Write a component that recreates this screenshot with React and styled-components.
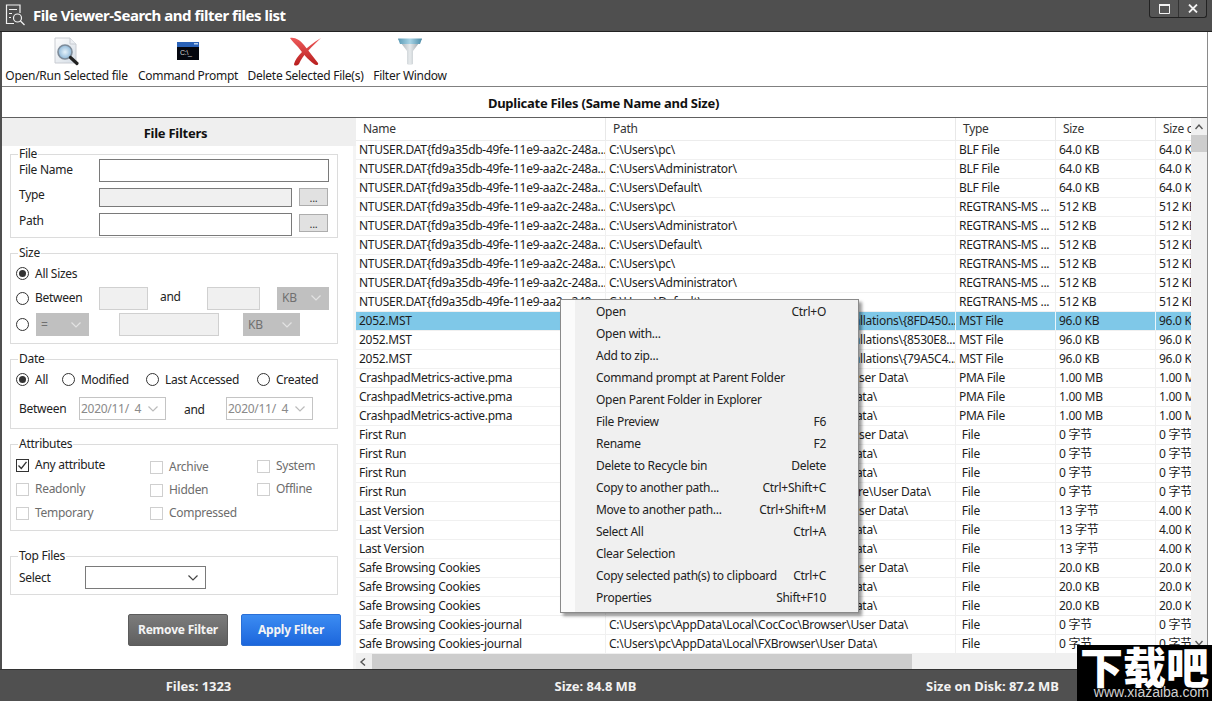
import React from 'react'
import styled, {createGlobalStyle} from 'styled-components'

const GlobalStyle = createGlobalStyle`
  html, body { margin: 0; padding: 0; background: #fff; }
  * { box-sizing: border-box; }
`

const Win = styled.div`
  position: relative;
  width: 1212px;
  height: 701px;
  overflow: hidden;
  display: flex;
  flex-direction: column;
  background: #fff;
  color: #222;
  font: 12px/16px "Noto Sans", "Noto Sans CJK SC", sans-serif;
  letter-spacing: -0.28px;
`
const TitleBar = styled.div`
  height: 32px;
  flex-shrink: 0;
  display: flex;
  align-items: flex-start;
  padding: 0 5px 0 5px;
  background: #4f4f4f;
  border-bottom: 1px solid #222;
`
const TitleIcon = styled.svg`
  width: 21px;
  height: 22px;
  margin-top: 4px;
`
const TitleText = styled.div`
  margin: 5px 0 0 7px;
  color: #fff;
  font-size: 15px;
  line-height: 20px;
  font-weight: 700;
  letter-spacing: -0.47px;
`
const WinButtons = styled.div`
  margin-left: auto;
  display: flex;
  height: 18px;
  border: 1px solid #222;
  border-top: 0;
  border-radius: 0 0 3px 3px;
  background: #555;
`
const WinButton = styled.div`
  width: 28px;
  display: flex;
  align-items: center;
  justify-content: center;
  & + & { border-left: 1px solid #333; }
`
const Frame = styled.div`
  flex: 1;
  min-height: 0;
  display: flex;
  flex-direction: column;
  margin-right: 4px;
  border-left: 2px solid #4f4f4f;
  border-right: 1px solid #8a8a8a;
`
const Toolbar = styled.div`
  height: 55px;
  flex-shrink: 0;
  display: flex;
  gap: 11px;
  padding: 5px 0 0 4px;
  border-bottom: 1px solid #808080;
`
const ToolButton = styled.div`
  display: flex;
  flex-direction: column;
  align-items: center;
  width: ${p => p.$w}px;
  white-space: nowrap;
  color: #1a1a1a;
`
const ToolIcon = styled.svg`
  width: 32px;
  height: 30px;
  margin-bottom: 1px;
`
const Banner = styled.div`
  height: 31px;
  flex-shrink: 0;
  display: flex;
  align-items: center;
  justify-content: center;
  font-size: 13px;
  font-weight: 700;
  letter-spacing: -0.26px;
  color: #111;
  padding: 2px 2px 0 0;
  border-bottom: 1px solid #606060;
`
const Body = styled.div`
  flex: 1;
  min-height: 0;
  display: flex;
`
const Side = styled.div`
  width: 354px;
  flex-shrink: 0;
  display: flex;
  flex-direction: column;
  border-right: 3px solid #f4f4f4;
`
const SideHead = styled.div`
  height: 28px;
  flex-shrink: 0;
  margin-right: -3px;
  display: flex;
  align-items: center;
  justify-content: center;
  padding: 1px 7px 0 0;
  background: #efefef;
  font-size: 13px;
  font-weight: 700;
  letter-spacing: -0.26px;
  color: #111;
`
const SideBody = styled.div`
  flex: 1;
  display: flex;
  flex-direction: column;
  padding: 8px 15px 0 8px;
`
const Group = styled.div`
  position: relative;
  height: ${p => p.$h}px;
  margin-bottom: ${p => p.$gap}px;
  padding: ${p => p.$top}px 8px 0 5px;
  border: 1px solid #dcdcdc;
  display: flex;
  flex-direction: column;
  gap: ${p => p.$rowGap || 0}px;
`
const GroupTitle = styled.div`
  position: absolute;
  top: -9px;
  left: 7px;
  padding: 0 1px;
  background: #fff;
  color: #222;
`
const Row = styled.div`
  display: flex;
  align-items: ${p => p.$align || 'center'};
  height: ${p => p.$h}px;
  padding-left: ${p => p.$pad || 0}px;
`
const Label = styled.div`
  width: ${p => p.$w}px;
  flex-shrink: 0;
  padding-left: ${p => p.$pl || 0}px;
  margin-top: ${p => p.$mt || 0}px;
  white-space: nowrap;
  color: #222;
`
const Input = styled.div`
  width: ${p => p.$w}px;
  height: ${p => p.$h || 23}px;
  flex-shrink: 0;
  margin-left: ${p => p.$ml || 0}px;
  border: 1px solid ${p => (p.$off ? '#d0d0d0' : '#7a7a7a')};
  background: ${p => (p.$fill ? '#f0f0f0' : '#fff')};
`
const DotsButton = styled.div`
  width: 29px;
  height: 18px;
  margin: ${p => p.$mt || 0}px 0 0 7px;
  border: 1px solid #adadad;
  background: #e1e1e1;
  text-align: center;
  line-height: 17px;
  font-size: 11px;
  color: #333;
`
const Select = styled.div`
  width: ${p => p.$w}px;
  height: 23px;
  flex-shrink: 0;
  margin-left: ${p => p.$ml || 0}px;
  display: flex;
  align-items: center;
  justify-content: space-between;
  padding: 0 7px 0 4px;
  background: ${p => (p.$plain ? '#fff' : '#c0c0c0')};
  border: 1px solid ${p => (p.$plain ? '#7a7a7a' : '#c0c0c0')};
  color: #707070;
`
const DateBox = styled(Select)`
  background: #fff;
  border-color: #c4c4c4;
  color: #8a8a8a;
  padding-left: 1px;
  white-space: pre;
`
const Chevron = styled.svg`
  width: 10px;
  height: 6px;
  flex-shrink: 0;
`
const Option = styled.div`
  width: ${p => (p.$w ? `${p.$w}px` : 'auto')};
  flex-shrink: 0;
  display: flex;
  align-items: center;
  gap: 6px;
  white-space: nowrap;
  margin-top: ${p => p.$mt || 0}px;
  color: ${p => (p.$off ? '#6d6d6d' : '#222')};
`
const Radio = styled.span`
  width: 13px;
  height: 13px;
  flex-shrink: 0;
  border-radius: 50%;
  border: 1px solid #333;
  background: #fff;
  display: flex;
  align-items: center;
  justify-content: center;
  &::after {
    content: '';
    width: 7px;
    height: 7px;
    border-radius: 50%;
    background: ${p => (p.$on ? '#333' : 'transparent')};
  }
`
const Box = styled.span`
  width: 13px;
  height: 13px;
  flex-shrink: 0;
  border: 1px solid ${p => (p.$off ? '#cfcfcf' : '#333')};
  background: #fff;
  display: flex;
  align-items: center;
  justify-content: center;
`
const AttrGrid = styled.div`
  display: grid;
  grid-template-columns: 134px 107px 1fr;
  grid-auto-rows: 24px;
  align-items: start;
`
const Actions = styled.div`
  display: flex;
  justify-content: flex-end;
  gap: 13px;
  margin: 19px -3px 0 0;
`
const ActionButton = styled.div`
  width: 100px;
  height: 32px;
  display: flex;
  align-items: center;
  justify-content: center;
  border-radius: 2px;
  font-weight: 700;
  letter-spacing: -0.2px;
  color: #f4f4f4;
  border: 1px solid ${p => (p.$primary ? '#2a6fd6' : '#5c5c5c')};
  background: linear-gradient(${p => (p.$primary ? '#3c8cf2, #1c66dc' : '#7c7c7c, #5f5f5f')});
`
const ListWrap = styled.div`
  flex: 1;
  min-width: 0;
  display: flex;
  flex-direction: column;
`
const ListTop = styled.div`
  flex: 1;
  min-height: 0;
  display: flex;
`
const Table = styled.div`
  flex: 1;
  min-width: 0;
  overflow: hidden;
`
const TableRow = styled.div`
  display: grid;
  grid-template-columns: 249px 350px 100px 100px 100px;
  width: 899px;
  height: 19px;
  border-bottom: 1px solid #f0f0f0;
  background: ${p => (p.$selected ? '#7fc8e8' : 'transparent')};
`
const HeadRow = styled(TableRow)`
  height: 23px;
  border-bottom: 1px solid #ececec;
`
const Cell = styled.div`
  padding-left: 3px;
  line-height: 18px;
  overflow: hidden;
  white-space: pre;
  color: #1d1d1d;
  border-left: 1px solid ${p => (p.$selected ? '#eaf6fb' : '#f0f0f0')};
  &:first-child { border-left: 0; }
`
const HeadCell = styled.div`
  padding-left: 7px;
  line-height: 21px;
  overflow: hidden;
  white-space: pre;
  color: #333;
  border-left: 1px solid #e8e8e8;
  &:first-child { border-left: 0; }
`
const VBar = styled.div`
  width: 16px;
  flex-shrink: 0;
  display: flex;
  flex-direction: column;
  align-items: center;
  background: #f0f0f0;
  padding-top: 5px;
`
const VThumb = styled.div`
  width: 100%;
  height: 17px;
  margin-top: 4px;
  background: #cdcdcd;
`
const VDown = styled.div`
  margin-top: auto;
  padding-bottom: 7px;
  display: flex;
`
const HBar = styled.div`
  height: 15px;
  flex-shrink: 0;
  display: flex;
  align-items: center;
  background: #f0f0f0;
  padding-left: 3px;
`
const HThumb = styled.div`
  width: 540px;
  height: 100%;
  margin-left: 5px;
  background: #cdcdcd;
`
const Arrow = styled.svg`
  width: 8px;
  height: 8px;
  flex-shrink: 0;
`
const Footer = styled.div`
  height: 32px;
  flex-shrink: 0;
  display: grid;
  grid-template-columns: repeat(3, 397px);
  align-items: center;
  padding-top: 1px;
  background: #505050;
  border-top: 1px solid #333;
  color: #f2f2f2;
  font-size: 13px;
  font-weight: 700;
  letter-spacing: -0.05px;
  text-align: center;
`
const Menu = styled.div`
  position: absolute;
  left: 560px;
  top: 299px;
  width: 299px;
  padding: 1px 0 3px;
  border: 1px solid #8a8a8a;
  box-shadow: 3px 3px 3px rgba(0, 0, 0, .4);
  background: linear-gradient(90deg, #fbfbfb 14px, #f0f0f0 14px);
`
const MenuItem = styled.div`
  height: 22px;
  display: flex;
  align-items: center;
  justify-content: space-between;
  padding: 0 32px 0 35px;
  color: #222;
  white-space: nowrap;
`
const Mark = styled.div`
  position: absolute;
  right: 0;
  bottom: 0;
  width: 135px;
  height: 56px;
  background: #000;
  color: #fff;
  display: flex;
  flex-direction: column;
  align-items: center;
  overflow: hidden;
`
const MarkLogo = styled.div`
  font: 900 43px/40px "Noto Sans CJK SC", sans-serif;
  letter-spacing: 0;
  white-space: nowrap;
`
const MarkUrl = styled.div`
  align-self: flex-end;
  padding-right: 3px;
  font: 14px/15px "Liberation Sans", sans-serif;
  letter-spacing: 0;
  color: #d0d0d0;
`

const NT = 'NTUSER.DAT{fd9a35db-49fe-11e9-aa2c-248a...'
const COC = 'C:\\Users\\pc\\AppData\\Local\\CocCoc\\Browser\\User Data\\'
const FX = 'C:\\Users\\pc\\AppData\\Local\\FXBrowser\\User Data\\'
const LONG = 'C:\\Users\\pc\\AppData\\Local\\KingsoftPC\\Software\\User Data\\'
const INST = 'C:\\ProgramData\\Microsoft\\Office\\Shared\\Installations\\'

const ntPaths = ['C:\\Users\\pc\\', 'C:\\Users\\Administrator\\', 'C:\\Users\\Default\\']

const rows = [
  ...[0, 1, 2].map(i => [NT, ntPaths[i], 'BLF File', '64.0 KB', '64.0 KB']),
  ...[0, 1, 2, 3, 4, 5].map(i => [NT, ntPaths[i % 3], 'REGTRANS-MS ...', '512 KB', '512 KB']),
  ['2052.MST', INST + '{8FD450...', 'MST File', '96.0 KB', '96.0 KB'],
  ['2052.MST', INST + '{8530E8...', 'MST File', '96.0 KB', '96.0 KB'],
  ['2052.MST', INST + '{79A5C4...', 'MST File', '96.0 KB', '96.0 KB'],
  ['CrashpadMetrics-active.pma', COC, 'PMA File', '1.00 MB', '1.00 MB'],
  ['CrashpadMetrics-active.pma', FX, 'PMA File', '1.00 MB', '1.00 MB'],
  ['CrashpadMetrics-active.pma', FX, 'PMA File', '1.00 MB', '1.00 MB'],
  ['First Run', COC, ' File', '0 字节', '0 字节'],
  ['First Run', FX, ' File', '0 字节', '0 字节'],
  ['First Run', FX, ' File', '0 字节', '0 字节'],
  ['First Run', LONG, ' File', '0 字节', '0 字节'],
  ['Last Version', COC, ' File', '13 字节', '4.00 KB'],
  ['Last Version', FX, ' File', '13 字节', '4.00 KB'],
  ['Last Version', FX, ' File', '13 字节', '4.00 KB'],
  ['Safe Browsing Cookies', COC, ' File', '20.0 KB', '20.0 KB'],
  ['Safe Browsing Cookies', FX, ' File', '20.0 KB', '20.0 KB'],
  ['Safe Browsing Cookies', FX, ' File', '20.0 KB', '20.0 KB'],
  ['Safe Browsing Cookies-journal', COC, ' File', '0 字节', '0 字节'],
  ['Safe Browsing Cookies-journal', FX, ' File', '0 字节', '0 字节'],
]

const menuItems = [
  ['Open', 'Ctrl+O'],
  ['Open with...'],
  ['Add to zip...'],
  ['Command prompt at Parent Folder'],
  ['Open Parent Folder in Explorer'],
  ['File Preview', 'F6'],
  ['Rename', 'F2'],
  ['Delete to Recycle bin', 'Delete'],
  ['Copy to another path...', 'Ctrl+Shift+C'],
  ['Move to another path...', 'Ctrl+Shift+M'],
  ['Select All', 'Ctrl+A'],
  ['Clear Selection'],
  ['Copy selected path(s) to clipboard', 'Ctrl+C'],
  ['Properties', 'Shift+F10'],
]

const ChevronDown = ({color = '#e2e2e2'}) => (
  <Chevron viewBox="0 0 10 6">
    <path d="M.5.5 5 5 9.5.5" fill="none" stroke={color} strokeWidth="1.2" />
  </Chevron>
)

const OpenIcon = () => (
  <ToolIcon viewBox="0 0 32 30">
    <defs>
      <linearGradient id="pageFill" x1="0" y1="0" x2="1" y2="1">
        <stop offset="0" stopColor="#fdfdfd" />
        <stop offset="1" stopColor="#d5dde6" />
      </linearGradient>
      <radialGradient id="lensFill">
        <stop offset="0" stopColor="#e6f3fb" />
        <stop offset="1" stopColor="#8fb8d8" />
      </radialGradient>
    </defs>
    <path d="M4 1h15l6 6v19H4z" fill="url(#pageFill)" stroke="#c9ccd2" />
    <path d="M19 1v6h6" fill="#eceff3" stroke="#c9ccd2" />
    <circle cx="14" cy="15" r="7" fill="url(#lensFill)" stroke="#7d8b99" strokeWidth="1.6" />
    <path d="M19.5 20.5 26 26.5" stroke="#222" strokeWidth="3.2" strokeLinecap="round" />
  </ToolIcon>
)

const PromptIcon = () => (
  <ToolIcon viewBox="0 0 32 30">
    <rect x="5" y="5" width="22" height="18" fill="#05070f" />
    <rect x="5" y="5" width="22" height="5" fill="#2a62b8" />
    <rect x="22" y="6" width="4" height="1.5" fill="#b8d0ee" />
    <text x="8" y="18" fontSize="7" fill="#d8d8d8" fontFamily="Liberation Sans, sans-serif">C:\_</text>
  </ToolIcon>
)

const DeleteIcon = () => (
  <ToolIcon viewBox="0 0 32 30">
    <defs>
      <linearGradient id="redFill" x1="0" y1="0" x2="0" y2="1">
        <stop offset="0" stopColor="#ee5a5a" />
        <stop offset="1" stopColor="#b81f1f" />
      </linearGradient>
    </defs>
    <path d="M0 1C5 0 10 3 14 8L28 26C29 28 26 29 24 27 18 23 12 15 8 10 5 7 2 4 0 1z" fill="url(#redFill)" />
    <path d="M31 1C24 5 17 11 12 15 8 19 5 23 4 27 4 29 7 29 9 27 11 22 14 18 18 14 22 9 27 5 31 1z" fill="url(#redFill)" />
  </ToolIcon>
)

const FunnelIcon = () => (
  <ToolIcon viewBox="0 0 32 30">
    <defs>
      <linearGradient id="stemFill" x1="0" y1="0" x2="1" y2="0">
        <stop offset="0" stopColor="#9aa3aa" />
        <stop offset=".5" stopColor="#e6eaec" />
        <stop offset="1" stopColor="#8b949b" />
      </linearGradient>
      <linearGradient id="rimFill" x1="0" y1="0" x2="1" y2="0">
        <stop offset="0" stopColor="#5a9ab5" />
        <stop offset=".5" stopColor="#a8d4e6" />
        <stop offset="1" stopColor="#4d8ca8" />
      </linearGradient>
    </defs>
    <path d="M4 2h24L19 14v13c-1 1-5 1-6 0V14z" fill="url(#stemFill)" />
    <path d="M4 1.500h24L26 7H6z" fill="url(#rimFill)" />
  </ToolIcon>
)

const tools = [
  {label: 'Open/Run Selected file', w: 121, icon: <OpenIcon />},
  {label: 'Command Prompt', w: 100, icon: <PromptIcon />},
  {label: 'Delete Selected File(s)', w: 113, icon: <DeleteIcon />},
  {label: 'Filter Window', w: 74, icon: <FunnelIcon />},
]

const RadioOption = ({on, w, children}) => (
  <Option $w={w}><Radio $on={on} />{children}</Option>
)

const CheckOption = ({on, mt, children}) => (
  <Option $off={!on} $mt={mt}>
    <Box $off={!on}>
      {on && (
        <svg width="11" height="11" viewBox="0 0 11 11">
          <path d="M1.500 5.500 4.300 8.500 9.500 1.800" fill="none" stroke="#333" strokeWidth="1.300" />
        </svg>
      )}
    </Box>
    {children}
  </Option>
)

const App = () => {
  return (
    <Win>
      <GlobalStyle />
      <TitleBar>
        <TitleIcon viewBox="0 0 21 22">
          <g fill="none" stroke="#f2f2f2" strokeWidth="1.200">
            <path d="M9 19.500H1.500V1h13.500v8" />
            <path d="M4 5.500h8M4 9.500h3M4 13.500h2" />
            <circle cx="12.500" cy="14" r="4" />
            <path d="M15.500 17 19.500 21" />
          </g>
        </TitleIcon>
        <TitleText>File Viewer-Search and filter files list</TitleText>
        <WinButtons>
          <WinButton>
            <svg width="11" height="10" viewBox="0 0 11 10">
              <path d="M.5 1.500h10v8H.5z" fill="none" stroke="#f2f2f2" />
              <path d="M0 1h11" stroke="#f2f2f2" strokeWidth="2" />
            </svg>
          </WinButton>
          <WinButton>
            <svg width="10" height="9" viewBox="0 0 10 9">
              <path d="M1 .5 9 8.500M9 .5 1 8.500" stroke="#f2f2f2" strokeWidth="1.800" />
            </svg>
          </WinButton>
        </WinButtons>
      </TitleBar>

      <Frame>
        <Toolbar>
          {tools.map(t => (
            <ToolButton key={t.label} $w={t.w}>{t.icon}{t.label}</ToolButton>
          ))}
        </Toolbar>
        <Banner>Duplicate Files (Same Name and Size)</Banner>
        <Body>
          <Side>
            <SideHead>File Filters</SideHead>
            <SideBody>
              <Group $h={84} $gap={15} $top={4} $rowGap={6}>
                <GroupTitle>File</GroupTitle>
                <Row $h={23} $align="flex-start" $pad={3}>
                  <Label $w={80} $mt={3}>File Name</Label>
                  <Input $w={230} />
                </Row>
                <Row $h={19} $align="flex-start" $pad={3}>
                  <Label $w={80} $mt={-1}>Type</Label>
                  <Input $w={193} $h={19} $fill />
                  <DotsButton>...</DotsButton>
                </Row>
                <Row $h={23} $align="flex-start" $pad={3}>
                  <Label $w={80}>Path</Label>
                  <Input $w={193} />
                  <DotsButton $mt={1}>...</DotsButton>
                </Row>
              </Group>

              <Group $h={91} $gap={15} $top={10} $rowGap={3}>
                <GroupTitle>Size</GroupTitle>
                <Row $h={19}><RadioOption on>All Sizes</RadioOption></Row>
                <Row $h={24}>
                  <RadioOption w={83}>Between</RadioOption>
                  <Input $w={49} $off $fill />
                  <Label $w={59} $mt={-2} $pl={12}>and</Label>
                  <Input $w={53} $off $fill />
                  <Select $w={52} $ml={17}>KB<ChevronDown /></Select>
                </Row>
                <Row $h={23}>
                  <RadioOption w={20} />
                  <Select $w={53}>=<ChevronDown /></Select>
                  <Input $w={100} $ml={30} $off $fill />
                  <Select $w={57} $ml={24}>KB<ChevronDown /></Select>
                </Row>
              </Group>

              <Group $h={70} $gap={15} $top={11} $rowGap={9}>
                <GroupTitle>Date</GroupTitle>
                <Row $h={17}>
                  <RadioOption on w={46}>All</RadioOption>
                  <RadioOption w={84}>Modified</RadioOption>
                  <RadioOption w={111}>Last Accessed</RadioOption>
                  <RadioOption>Created</RadioOption>
                </Row>
                <Row $h={23} $pad={3}>
                  <Label $w={60}>Between</Label>
                  <DateBox $w={87}>2020/11/  4<ChevronDown color="#bbb" /></DateBox>
                  <Label $w={60} $mt={2} $pl={18}>and</Label>
                  <DateBox $w={87}>2020/11/  4<ChevronDown color="#bbb" /></DateBox>
                </Row>
              </Group>

              <Group $h={87} $gap={25} $top={12}>
                <GroupTitle>Attributes</GroupTitle>
                <AttrGrid>
                  <CheckOption on>Any attribute</CheckOption>
                  <CheckOption mt={2}>Archive</CheckOption>
                  <CheckOption mt={1}>System</CheckOption>
                  <CheckOption>Readonly</CheckOption>
                  <CheckOption mt={1}>Hidden</CheckOption>
                  <CheckOption>Offline</CheckOption>
                  <CheckOption>Temporary</CheckOption>
                  <CheckOption>Compressed</CheckOption>
                </AttrGrid>
              </Group>

              <Group $h={39} $gap={0} $top={9}>
                <GroupTitle>Top Files</GroupTitle>
                <Row $h={23} $pad={3}>
                  <Label $w={66}>Select</Label>
                  <Select $w={121} $plain><span /><ChevronDown color="#444" /></Select>
                </Row>
              </Group>

              <Actions>
                <ActionButton>Remove Filter</ActionButton>
                <ActionButton $primary>Apply Filter</ActionButton>
              </Actions>
            </SideBody>
          </Side>

          <ListWrap>
            <ListTop>
              <Table>
                <HeadRow>
                  {['Name', 'Path', 'Type', 'Size', 'Size on Disk'].map(h => (
                    <HeadCell key={h}>{h}</HeadCell>
                  ))}
                </HeadRow>
                {rows.map((r, i) => (
                  <TableRow key={i} $selected={i === 9}>
                    {r.map((c, j) => (
                      <Cell key={j} $selected={i === 9}>{c}</Cell>
                    ))}
                  </TableRow>
                ))}
              </Table>
              <VBar>
                <Arrow viewBox="0 0 8 8">
                  <path d="M.5 6 4 2l3.500 4" fill="none" stroke="#555" strokeWidth="1.400" />
                </Arrow>
                <VThumb />
                <VDown>
                  <Arrow viewBox="0 0 8 8">
                    <path d="M.5 2 4 6l3.500-4" fill="none" stroke="#555" strokeWidth="1.400" />
                  </Arrow>
                </VDown>
              </VBar>
            </ListTop>
            <HBar>
              <Arrow viewBox="0 0 8 8">
                <path d="M6 .5 2 4l4 3.500" fill="none" stroke="#555" strokeWidth="1.400" />
              </Arrow>
              <HThumb />
            </HBar>
          </ListWrap>
        </Body>
      </Frame>

      <Footer>
        <div>Files: 1323</div>
        <div>Size: 84.8 MB</div>
        <div>Size on Disk: 87.2 MB</div>
      </Footer>

      <Menu>
        {menuItems.map(([label, keys]) => (
          <MenuItem key={label}>
            <span>{label}</span>
            {keys && <span>{keys}</span>}
          </MenuItem>
        ))}
      </Menu>

      <Mark>
        <MarkLogo>下载吧</MarkLogo>
        <MarkUrl>www.xiazaiba.com</MarkUrl>
      </Mark>
    </Win>
  )
}

export default App
